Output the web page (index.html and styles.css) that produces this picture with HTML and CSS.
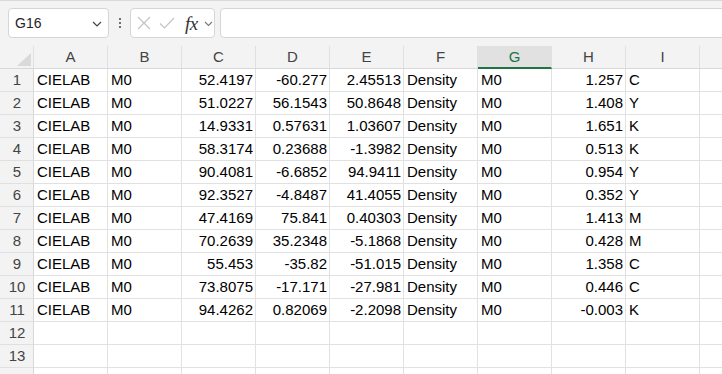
FILE: index.html
```html
<!DOCTYPE html>
<html>
<head>
<meta charset="utf-8">
<link rel="stylesheet" href="styles.css">
</head>
<body>
<div class="app">
  <div class="fbar">
    <div class="namebox">
      <span class="nb-text">G16</span>
      <svg class="chev" width="10" height="6" viewBox="0 0 10 6"><path d="M1 1 L5 5 L9 1" fill="none" stroke="#444" stroke-width="1.2"/></svg>
    </div>
    <div class="dots"><span></span><span></span><span></span></div>
    <div class="fxbox">
      <svg class="ico" width="14" height="14" viewBox="0 0 14 14"><path d="M1 1 L13 13 M13 1 L1 13" stroke="#c4c4c4" stroke-width="1.2" fill="none"/></svg>
      <svg class="ico" width="16" height="14" viewBox="0 0 16 14"><path d="M1 7.5 L5.5 12 L15 2" stroke="#c4c4c4" stroke-width="1.2" fill="none"/></svg>
      <span class="fx">fx</span>
      <svg class="chev2" width="9" height="6" viewBox="0 0 9 6"><path d="M1 1 L4.5 4.5 L8 1" fill="none" stroke="#777" stroke-width="1.1"/></svg>
    </div>
    <div class="finput"></div>
  </div>
  <div class="grid" id="grid"></div>
</div>
<script>
var data = [
["CIELAB","M0","52.4197","-60.277","2.45513","Density","M0","1.257","C"],
["CIELAB","M0","51.0227","56.1543","50.8648","Density","M0","1.408","Y"],
["CIELAB","M0","14.9331","0.57631","1.03607","Density","M0","1.651","K"],
["CIELAB","M0","58.3174","0.23688","-1.3982","Density","M0","0.513","K"],
["CIELAB","M0","90.4081","-6.6852","94.9411","Density","M0","0.954","Y"],
["CIELAB","M0","92.3527","-4.8487","41.4055","Density","M0","0.352","Y"],
["CIELAB","M0","47.4169","75.841","0.40303","Density","M0","1.413","M"],
["CIELAB","M0","70.2639","35.2348","-5.1868","Density","M0","0.428","M"],
["CIELAB","M0","55.453","-35.82","-51.015","Density","M0","1.358","C"],
["CIELAB","M0","73.8075","-17.171","-27.981","Density","M0","0.446","C"],
["CIELAB","M0","94.4262","0.82069","-2.2098","Density","M0","-0.003","K"]
];
var numCols = [2,3,4,7];
var g = document.getElementById('grid');
var h = '<div class="corner"><span class="tri"></span></div>';
"ABCDEFGHI".split('').forEach(function(c){
  h += '<div class="ch' + (c==='G'?' sel':'') + '">' + c + '</div>';
});
h += '<div class="ch last"></div>';
for (var r = 0; r < 14; r++) {
  h += '<div class="rh">' + (r < 13 ? (r+1) : '') + '</div>';
  for (var c = 0; c < 10; c++) {
    var v = (data[r] && c < 9) ? data[r][c] : '';
    var cls = 'cell' + (numCols.indexOf(c) >= 0 ? ' num' : '') + (c===9?' last':'');
    h += '<div class="' + cls + '">' + v + '</div>';
  }
}
g.innerHTML = h;
</script>
</body>
</html>
```
FILE: styles.css
```css
html, body {
  margin: 0;
  padding: 0;
  background: #ffffff;
  overflow: hidden;
}
.app {
  width: 722px;
  height: 374px;
  overflow: hidden;
  font-family: "Liberation Sans", Arial, sans-serif;
}
.fbar {
  height: 46px;
  box-sizing: border-box;
  background: #f3f3f3;
  border-top: 1px solid #dadada;
  padding: 7px 0 8px 8px;
  display: flex;
  align-items: stretch;
}
.namebox {
  width: 101px;
  box-sizing: border-box;
  background: #fff;
  border: 1px solid #d6d6d6;
  border-radius: 4px;
  display: flex;
  align-items: center;
  justify-content: space-between;
  padding: 0 6px 0 6px;
}
.nb-text {
  font-size: 14px;
  color: #242424;
}
.chev {
  margin-top: 2px;
}
.dots {
  width: 21px;
  display: flex;
  flex-direction: column;
  align-items: center;
  justify-content: center;
  gap: 2px;
}
.dots span {
  width: 2px;
  height: 2px;
  background: #444;
  border-radius: 1px;
}
.fxbox {
  width: 85px;
  box-sizing: border-box;
  background: #fff;
  border: 1px solid #d6d6d6;
  border-radius: 4px;
  display: flex;
  align-items: center;
  padding: 0 0 0 6px;
  gap: 8px;
}
.fx {
  font-family: "Liberation Serif", "Times New Roman", serif;
  font-style: italic;
  font-size: 19px;
  color: #333;
  margin-left: 2px;
  letter-spacing: -0.5px;
  line-height: 1;
}
.chev2 {
  margin-left: -2px;
  margin-top: 2px;
}
.finput {
  flex: 1;
  margin-left: 5px;
  margin-right: -10px;
  background: #fff;
  border: 1px solid #d6d6d6;
  border-radius: 4px;
}
.grid {
  display: grid;
  grid-template-columns: 34px repeat(9, 74px) 74px;
  grid-template-rows: 23px;
  grid-auto-rows: 23px;
  font-size: 15px;
  color: #000;
}
.corner {
  background: #f3f3f3;
  border-right: 1px solid #e0e0e0;
  border-bottom: 1px solid #d8d8d8;
  position: relative;
}
.tri {
  position: absolute;
  right: 2px;
  bottom: 2px;
  width: 0;
  height: 0;
  border-left: 14px solid transparent;
  border-bottom: 13px solid #d9d9d9;
}
.ch {
  background: #f3f3f3;
  border-right: 1px solid #e0e0e0;
  border-bottom: 1px solid #d8d8d8;
  color: #444;
  text-align: center;
  line-height: 22px;
  box-sizing: border-box;
}
.ch.sel {
  background: #e1e1e1;
  color: #1e7145;
  border-bottom: 2px solid #217346;
  line-height: 21px;
}
.rh {
  background: #f3f3f3;
  border-right: 1px solid #d8d8d8;
  border-bottom: 1px solid #e0e0e0;
  color: #444;
  text-align: center;
  line-height: 22px;
  padding-left: 1px;
}
.cell {
  border-right: 1px solid #e1e1e1;
  border-bottom: 1px solid #e1e1e1;
  line-height: 22px;
  padding: 0 3px;
  white-space: nowrap;
  overflow: hidden;
}
.cell.num {
  text-align: right;
  padding-right: 2px;
}
```
